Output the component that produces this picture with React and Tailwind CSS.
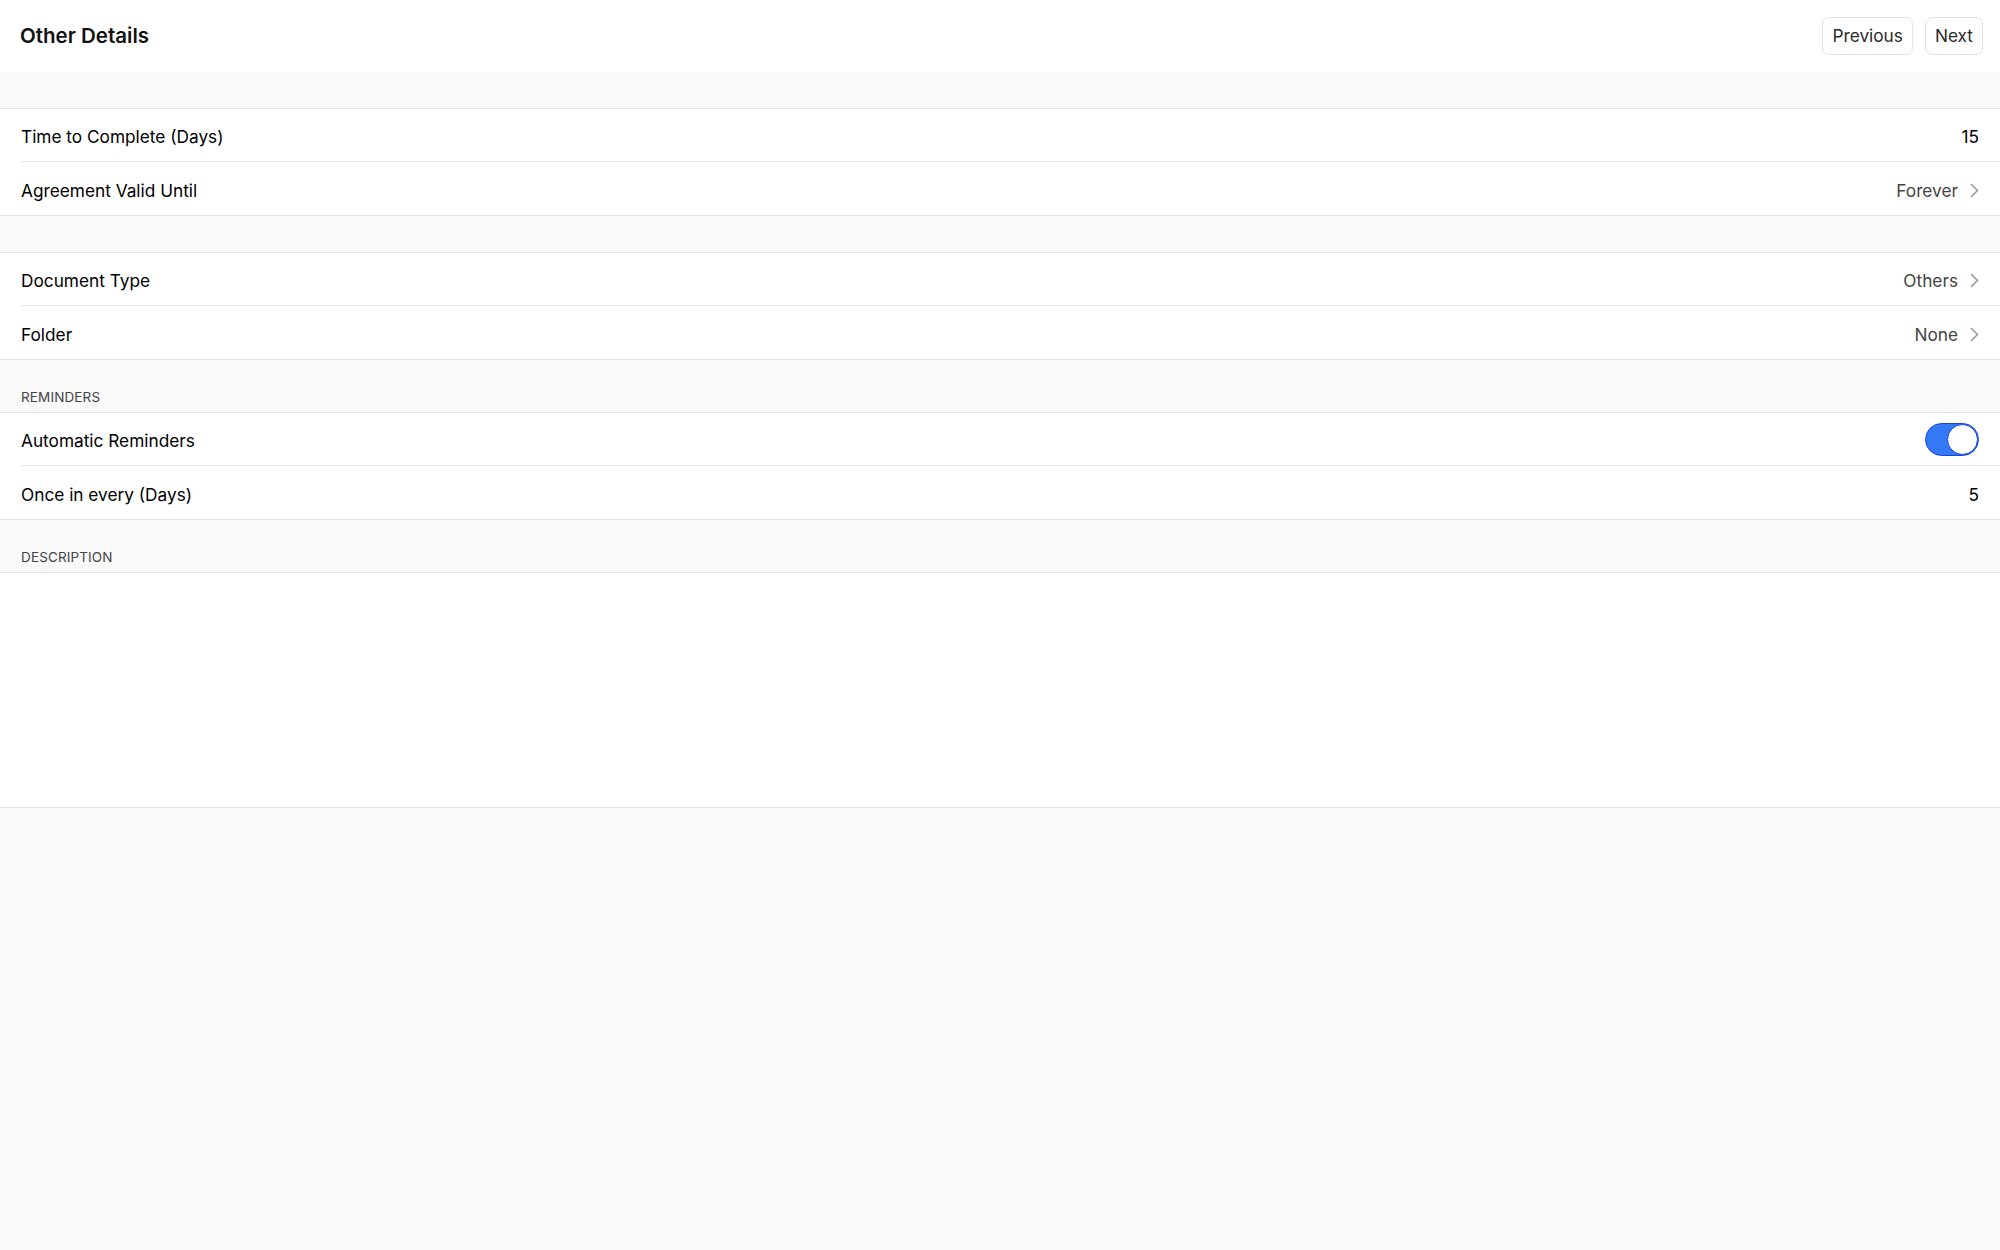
import { useState } from 'react';

const font = { fontFamily: 'Inter, "Noto Sans", sans-serif' };

function Chevron() {
  return (
    <svg width="9" height="15" viewBox="0 0 9 15" fill="none" className="ml-[12px] mt-[3px]">
      <path d="M1.5 1.5L7.5 7.5L1.5 13.5" stroke="#9a9a9a" strokeWidth="1.6" strokeLinecap="round" strokeLinejoin="round" />
    </svg>
  );
}

function Row({ label, last, children }) {
  return (
    <div className="pl-[21px] bg-white">
      <div className={`h-[53px] pr-[21px] flex items-center justify-between ${last ? '' : 'border-b border-[#e3e3e3]'}`}>
        <span className="pt-[4px] text-[17.25px] text-black">{label}</span>
        <div className="flex items-center">{children}</div>
      </div>
    </div>
  );
}

function Group({ children }) {
  return <div className="bg-white border-b border-[#e3e3e3]">{children}</div>;
}

function SectionLabel({ title }) {
  return (
    <div className="h-[53px] border-b border-[#e3e3e3] flex items-end pl-[21px] pb-[7px]">
      {title && <span className="text-[13.5px] leading-[16px] text-[#444] uppercase tracking-[0.01em]">{title}</span>}
    </div>
  );
}

function Toggle({ on, onChange }) {
  return (
    <button
      onClick={() => onChange(!on)}
      className={`w-[54px] h-[33px] rounded-full flex items-center border-[1.5px] ${
        on ? 'bg-[#3478f6] border-[#1446e0] justify-end' : 'bg-[#e5e5ea] border-[#d0d0d0] justify-start'
      }`}
    >
      <span className={`w-[31px] h-[31px] rounded-full bg-white border-[1.5px] ${on ? 'border-[#1446e0]' : 'border-[#d0d0d0]'}`} />
    </button>
  );
}

export default function App() {
  const [reminders, setReminders] = useState(true);

  return (
    <div className="min-h-screen bg-[#f9f9f9]" style={font}>
      {/* Header */}
      <div className="h-[72px] bg-white flex items-center justify-between pl-[20px] pr-[17px]">
        <h1 className="text-[20.5px] font-semibold text-[#111]">Other Details</h1>
        <div className="flex gap-[12px]">
          <button className="h-[38px] px-[9px] rounded-[7px] border border-[#e2e2e2] bg-white text-[17.25px] text-[#2a2a2a]">Previous</button>
          <button className="h-[38px] px-[9px] rounded-[7px] border border-[#e2e2e2] bg-white text-[17.25px] text-[#2a2a2a]">Next</button>
        </div>
      </div>

      <div className="h-[37px] border-b border-[#e3e3e3]" />
      <Group>
        <Row label="Time to Complete (Days)">
          <span className="pt-[4px] text-[17.25px] text-black">15</span>
        </Row>
        <Row label="Agreement Valid Until" last>
          <span className="pt-[4px] text-[17.25px] text-[#444]">Forever</span>
          <Chevron />
        </Row>
      </Group>

      <div className="h-[37px] border-b border-[#e3e3e3]" />
      <Group>
        <Row label="Document Type">
          <span className="pt-[4px] text-[17.25px] text-[#444]">Others</span>
          <Chevron />
        </Row>
        <Row label="Folder" last>
          <span className="pt-[4px] text-[17.25px] text-[#444]">None</span>
          <Chevron />
        </Row>
      </Group>

      <SectionLabel title="Reminders" />
      <Group>
        <Row label="Automatic Reminders">
          <Toggle on={reminders} onChange={setReminders} />
        </Row>
        <Row label="Once in every (Days)" last>
          <span className="pt-[4px] text-[17.25px] text-black">5</span>
        </Row>
      </Group>

      <SectionLabel title="Description" />
      <div className="h-[235px] bg-white border-b border-[#e3e3e3]">
        <textarea className="w-full h-full resize-none outline-none px-[21px] py-[12px] text-[17px] bg-transparent" />
      </div>
    </div>
  );
}
